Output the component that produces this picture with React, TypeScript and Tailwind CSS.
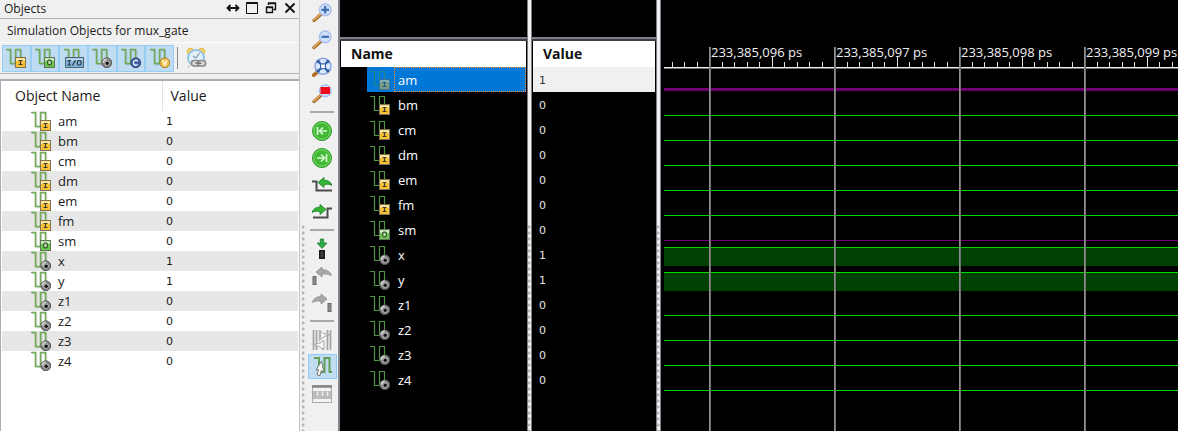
import React from "react";

type Kind = "in" | "out" | "inout" | "internal" | "constant" | "variable";

type Signal = { name: string; value: string; kind: Kind };

const signals: Signal[] = [
  { name: "am", value: "1", kind: "in" },
  { name: "bm", value: "0", kind: "in" },
  { name: "cm", value: "0", kind: "in" },
  { name: "dm", value: "0", kind: "in" },
  { name: "em", value: "0", kind: "in" },
  { name: "fm", value: "0", kind: "in" },
  { name: "sm", value: "0", kind: "out" },
  { name: "x", value: "1", kind: "internal" },
  { name: "y", value: "1", kind: "internal" },
  { name: "z1", value: "0", kind: "internal" },
  { name: "z2", value: "0", kind: "internal" },
  { name: "z3", value: "0", kind: "internal" },
  { name: "z4", value: "0", kind: "internal" },
];

const times = ["233,385,096 ps", "233,385,097 ps", "233,385,098 ps", "233,385,099 ps"];

function Badge({ kind }: { kind: Kind }) {
  switch (kind) {
    case "in":
      return (
        <>
          <rect x="9.5" y="9.5" width="10" height="10" fill="#f8c234" stroke="#7d7258" />
          <path d="M10 11.5H19" stroke="#ffe9a6" strokeWidth="2.5" />
          <path d="M12.500 12.500H16.500M14.500 12.500V16.500M12.500 16.500H16.500" stroke="#3f3a2c" strokeWidth="1.2" />
        </>
      );
    case "out":
      return (
        <>
          <rect x="9.5" y="9.5" width="10" height="10" fill="#6cc94f" stroke="#62705c" />
          <path d="M10 11.5H19" stroke="#d5f2cb" strokeWidth="2.5" />
          <rect x="12.7" y="12.2" width="3.6" height="4.6" rx="1.2" fill="#bce8ae" stroke="#2f4a28" strokeWidth="1.2" />
        </>
      );
    case "inout":
      return (
        <>
          <rect x="1.5" y="9.5" width="18" height="10" fill="#7fb2d8" stroke="#4d6577" />
          <path d="M2.5 11.5H18.5" stroke="#c6e0f2" strokeWidth="2" />
          <path d="M3.5 12.5H7M5.2 12.5V17M3.5 17H7M8.5 17.5L11.5 12" stroke="#26333d" strokeWidth="1.1" />
          <rect x="13.4" y="12.5" width="3.6" height="4.5" rx="1.2" fill="none" stroke="#26333d" strokeWidth="1.1" />
        </>
      );
    case "internal":
      return (
        <>
          <circle cx="14.8" cy="14.8" r="4.9" fill="#858585" stroke="#555" />
          <path d="M11.2 14.8A3.8 3.8 0 0 1 14.8 11.2" stroke="#d6d6d6" strokeWidth="1.6" fill="none" />
          <circle cx="15" cy="15" r="2.8" fill="#b0b0b0" />
          <circle cx="15.2" cy="15.2" r="1.7" fill="#151515" />
        </>
      );
    case "constant":
      return (
        <>
          <circle cx="14.8" cy="14.8" r="4.9" fill="#3f5f9f" stroke="#2c4272" />
          <path d="M16.8 13.2A2.5 2.5 0 1 0 16.8 16.4" stroke="#e8eefb" strokeWidth="1.4" fill="none" />
        </>
      );
    case "variable":
      return (
        <>
          <circle cx="14.8" cy="14.8" r="4.9" fill="#f3c04a" stroke="#a07c2c" />
          <path d="M12.8 12.4L14.8 17L16.8 12.4" stroke="#fff8e0" strokeWidth="1.5" fill="none" />
        </>
      );
  }
}

function SignalIcon({ kind, dark = false, dim = false }: { kind: Kind; dark?: boolean; dim?: boolean }) {
  return (
    <svg width="20" height="20" viewBox="0 0 20 20" fill="none" aria-hidden="true" className={dim ? "block shrink-0 opacity-50" : "block shrink-0"}>
      {!dark && <path d="M1 2.5H5.5V16.5H10.5V2.5H15.5V10" stroke="#00000022" strokeWidth="1.5" />}
      <path d="M0 1.5H4.5V15.5H9.5V1.5H14.5V10" stroke={dark ? "#4d9440" : "#70ab55"} strokeWidth={dark ? 1.2 : 1.6} />
      <Badge kind={kind} />
    </svg>
  );
}

function AlarmIcon() {
  return (
    <svg width="22" height="22" viewBox="0 0 22 22" fill="none" aria-hidden="true">
      <circle cx="4.5" cy="4.5" r="3.2" fill="#f5cf62" stroke="#dcb14a" />
      <circle cx="15.5" cy="4.5" r="3.2" fill="#f5cf62" stroke="#dcb14a" />
      <circle cx="10" cy="11" r="8" fill="#e2f0f9" stroke="#93c3e2" strokeWidth="1.8" />
      <path d="M10 11L13.5 6M10 11L7 9" stroke="#7d97ad" strokeWidth="1.2" />
      <path d="M3.5 18.5L2 20.5" stroke="#9ab3c6" />
      <rect x="5.5" y="13.5" width="7.5" height="5.500" rx="2.5" fill="#ddd" stroke="#8a8a8a" strokeWidth="1.700" />
      <rect x="12" y="13.5" width="7.5" height="5.500" rx="2.5" fill="#ddd" stroke="#8a8a8a" strokeWidth="1.700" />
      <path d="M9.5 16.200H15.5" stroke="#777" strokeWidth="1.6" />
    </svg>
  );
}

function Lens({ children }: { children: React.ReactNode }) {
  return (
    <svg width="20" height="20" viewBox="0 0 20 20" fill="none" aria-hidden="true">
      <path d="M2 17.500L8.500 11.800" stroke="#9b6524" strokeWidth="3.2" strokeLinecap="round" />
      <path d="M2 17L8 11.500" stroke="#e0a654" strokeWidth="1.7" strokeLinecap="round" />
      <circle cx="13.2" cy="6.8" r="5.8" fill="#cfe1fb" stroke="#a9bcf0" strokeWidth="1.4" />
      {children}
    </svg>
  );
}

const tools: Record<string, React.ReactNode> = {
  "Zoom in": (
    <Lens>
      <path d="M13.2 3V10.6M9.4 6.8H17" stroke="#3f6cae" strokeWidth="2.2" />
    </Lens>
  ),
  "Zoom out": (
    <Lens>
      <path d="M9.4 6.8H17" stroke="#3f6cae" strokeWidth="2.2" />
    </Lens>
  ),
  "Zoom to full view": (
    <svg width="20" height="20" viewBox="0 0 20 20" fill="none" aria-hidden="true">
      <path d="M1.8 18.2L5 15.4" stroke="#b46d20" strokeWidth="3.6" strokeLinecap="round" />
      <circle cx="11" cy="9.3" r="8" fill="#d9e8fc" stroke="#8ea6e0" strokeWidth="1.5" />
      <path d="M6 4.300L9 7.3M16 4.300L13 7.3M6 14.300L9 11.3M16 14.300L13 11.3" stroke="#2f5ba5" strokeWidth="2" />
      <path d="M4.8 6.800V3.300H8.3ZM17.2 6.800V3.300H13.7ZM4.8 11.8V15.3H8.3ZM17.2 11.8V15.3H13.7Z" fill="#2f5ba5" />
      <rect x="8.6" y="6.9" width="4.8" height="4.8" fill="#f2f8ff" stroke="#2f5ba5" />
    </svg>
  ),
  "Zoom to selection": (
    <Lens>
      <rect x="8.5" y="3" width="9.5" height="7" fill="#ee0a1c" />
    </Lens>
  ),
  "Go to start": (
    <svg width="22" height="22" viewBox="0 0 22 22" fill="none" aria-hidden="true">
      <circle cx="11" cy="11" r="9.5" fill="#41b935" stroke="#2a9a27" />
      <circle cx="11" cy="11" r="8.2" stroke="#7edb6e" />
      <path d="M6.5 7V15M16 11H8.5M12 7.500L8.5 11L12 14.500" stroke="#d8f7d0" strokeWidth="1.7" />
    </svg>
  ),
  "Go to end": (
    <svg width="22" height="22" viewBox="0 0 22 22" fill="none" aria-hidden="true">
      <circle cx="11" cy="11" r="9.5" fill="#41b935" stroke="#2a9a27" />
      <circle cx="11" cy="11" r="8.2" stroke="#7edb6e" />
      <path d="M15.5 7V15M6 11H13.5M10 7.500L13.5 11L10 14.500" stroke="#d8f7d0" strokeWidth="1.7" />
    </svg>
  ),
  "Previous transition": (
    <svg width="20" height="16" viewBox="0 0 20 16" fill="none" aria-hidden="true">
      <path d="M0 4.5H4.5V13.5H20" stroke="#4c4c4c" strokeWidth="2" />
      <path d="M6 5.5L12 .5V3.2C16 3 19 5 20 8.5C17.5 7 15 7 12 7.6V10.5Z" fill="#35b535" stroke="#167f1e" strokeWidth=".8" />
    </svg>
  ),
  "Next transition": (
    <svg width="20" height="16" viewBox="0 0 20 16" fill="none" aria-hidden="true">
      <path d="M1 13.5H15.5V4.5H20" stroke="#4c4c4c" strokeWidth="2" />
      <path d="M14 5.5L8 .5V3.2C4 3 1 5 0 8.5C2.500 7 5 7 8 7.600V10.5Z" fill="#35b535" stroke="#167f1e" strokeWidth=".8" />
    </svg>
  ),
  "Add marker": (
    <svg width="12" height="22" viewBox="0 0 12 22" fill="none" aria-hidden="true">
      <path d="M4.300 1H7.700V5H11L6 10.500L1 5H4.300Z" fill="#2fa846" stroke="#23813a" strokeWidth=".8" />
      <rect x="3.700" y="12.700" width="4.600" height="7.600" fill="#3d3d3d" stroke="#111" strokeWidth="1.300" />
    </svg>
  ),
  "Previous marker": (
    <svg width="20" height="20" viewBox="0 0 20 20" fill="none" aria-hidden="true">
      <path d="M4 6L10 1V3.700C14.500 3.500 18 5.500 19.500 9.500C16 7.800 13 7.800 10 8.200V11Z" fill="#a8a8a8" stroke="#8a8a8a" strokeWidth=".8" />
      <rect x="1" y="10.500" width="3" height="8" fill="#8c8c8c" stroke="#6b6b6b" />
    </svg>
  ),
  "Next marker": (
    <svg width="20" height="20" viewBox="0 0 20 20" fill="none" aria-hidden="true">
      <path d="M15 6L9 1V3.700C4.500 3.500 1.500 5.500 .5 9.500C3.500 7.800 6 7.800 9 8.200V11Z" fill="#a8a8a8" stroke="#8a8a8a" strokeWidth=".8" />
      <rect x="16" y="10.500" width="3" height="8" fill="#8c8c8c" stroke="#6b6b6b" />
    </svg>
  ),
  "Swap cursors": (
    <svg width="20" height="22" viewBox="0 0 20 22" fill="none" aria-hidden="true">
      <path d="M1.500 1V21M4.500 1V21M15.500 1V21M18.500 1V21" stroke="#a3a3a3" strokeWidth="1.700" />
      <path d="M7.500 1V12M10.500 13V21" stroke="#b5b5b5" strokeWidth="1.500" />
      <path d="M8 1.500L11 4.500L18 5.500L12 7.500L9 10.500Z" fill="#fafafa" stroke="#a5a5a5" />
      <path d="M12 11.500L8 14L1.500 15.500L7 17.500L12 20.500Z" fill="#fafafa" stroke="#a5a5a5" />
    </svg>
  ),
  "Snap to transition": (
    <svg width="20" height="21" viewBox="0 0 20 21" fill="none" aria-hidden="true">
      <path d="M1 2H6V16H11.500V2H16.500V16H19" stroke="#5f9f50" strokeWidth="2" />
      <path d="M8.500 5L3 14L5.500 13.500L4 19L7 19.500L8.300 14.500L11 16.500Z" fill="#fafafa" stroke="#777" />
    </svg>
  ),
  "Floating ruler": (
    <svg width="22" height="20" viewBox="0 0 22 20" fill="none" aria-hidden="true">
      <rect x="1.500" y="1.500" width="19" height="17" fill="#f2f2f2" stroke="#ababab" />
      <path d="M1 2.500H21" stroke="#858585" strokeWidth="2.500" />
      <rect x="2" y="7" width="18" height="8" fill="#bcbcbc" />
      <path d="M6.500 7.500V12M11.500 7.500V12M16.500 7.500V12" stroke="#f0f0f0" strokeWidth="1.400" />
    </svg>
  ),
};

const toolGroups = [
  ["Zoom in", "Zoom out", "Zoom to full view", "Zoom to selection"],
  ["Go to start", "Go to end", "Previous transition", "Next transition"],
  ["Add marker", "Previous marker", "Next marker"],
  ["Swap cursors", "Snap to transition", "Floating ruler"],
];

const filters: { kind: Kind; label: string }[] = [
  { kind: "in", label: "Inputs" },
  { kind: "out", label: "Outputs" },
  { kind: "inout", label: "Bidirectional" },
  { kind: "internal", label: "Internal" },
  { kind: "constant", label: "Constants" },
  { kind: "variable", label: "Variables" },
];

function Grip() {
  return (
    <div className="mt-[225px] w-[4px] grow bg-[radial-gradient(circle_at_1px_2px,#b4b4b4_1px,transparent_2px)] bg-[length:4px_6px]" />
  );
}

function PaneSplitter() {
  return (
    <div className="flex w-[5px] shrink-0 flex-col items-center border-x border-[#7d7f88] bg-[#f0f0f0]">
      <Grip />
    </div>
  );
}

function ObjectsPanel() {
  return (
    <section className="flex w-[300px] shrink-0 flex-col border-r border-[#c3c3c3]">
      <header className="flex h-[19px] items-center justify-between border-b border-[#b4b4b4] pr-[3px] pl-[4px]">
        <h2 className="text-[12px] leading-[18px]">Objects</h2>
        <div className="flex items-center gap-[6px] pb-[2px]">
          <button aria-label="Move">
            <svg width="14" height="12" viewBox="0 0 14 12" fill="none" className="block" aria-hidden="true">
              <path d="M2 6H12M4.500 3L1.500 6L4.500 9M9.500 3L12.500 6L9.500 9" stroke="#111" strokeWidth="1.800" />
            </svg>
          </button>
          <button aria-label="Maximize">
            <svg width="12" height="12" viewBox="0 0 12 12" fill="none" className="block" aria-hidden="true">
              <path d="M.5 .5H11.500V11.500H.5ZM0 1.500H12" stroke="#111" />
            </svg>
          </button>
          <button aria-label="Restore" className="px-[1px]">
            <svg width="12" height="12" viewBox="0 0 12 12" fill="none" className="block" aria-hidden="true">
              <path d="M3.500 3V1.500H10.500V7.500H8.500M3 1H11" stroke="#111" strokeWidth="1.400" />
              <path d="M1.500 5.500H7.500V10.500H1.500ZM1 5H8" stroke="#111" strokeWidth="1.400" />
            </svg>
          </button>
          <button aria-label="Close">
            <svg width="12" height="12" viewBox="0 0 12 12" fill="none" className="block" aria-hidden="true">
              <path d="M1.500 1.500L10.500 10.500M10.500 1.500L1.500 10.500" stroke="#111" strokeWidth="1.800" />
            </svg>
          </button>
        </div>
      </header>
      <p className="h-[23px] pl-[7px] text-[12px] leading-[23px]">Simulation Objects for mux_gate</p>
      <div className="mb-[5px] flex h-[32px] items-center border-y border-t-white border-b-[#b4b4b4] pl-[2px]">
        <div className="flex w-[172px]">
          {filters.map((f) => (
            <button
              key={f.kind}
              aria-label={f.label}
              aria-pressed="true"
              className="flex h-[27px] flex-1 items-center justify-center border border-[#98cdf4] bg-[#c0dcf3]"
            >
              <SignalIcon kind={f.kind} />
            </button>
          ))}
        </div>
        <div className="ml-[3px] h-[22px] w-px bg-[#8a8a8a]" />
        <button aria-label="Relaunch" className="ml-[8px]">
          <AlarmIcon />
        </button>
      </div>
      <div className="grow border-t-2 border-l border-[#a8adb5] bg-white px-[1px]">
        <table className="w-full table-fixed border-collapse text-left">
          <thead>
            <tr className="h-[30px] text-[14px] leading-[20px]">
              <th className="w-[160px] border-r border-[#e2e2e2] pl-[13px] font-normal">Object Name</th>
              <th className="pl-[8px] font-normal">Value</th>
            </tr>
          </thead>
          <tbody>
            {signals.map((s) => (
              <tr key={s.name} className="h-[20px] even:bg-[#e7e7e7]">
                <td className="p-0">
                  <div className="flex h-[20px] items-center gap-[7px] pl-[29px] text-[13px] leading-[20px]">
                    <SignalIcon kind={s.kind} />
                    {s.name}
                  </div>
                </td>
                <td className="p-0 pt-[2px] pl-[4px] font-['DejaVu_Sans',sans-serif] text-[11px] leading-[18px]">{s.value}</td>
              </tr>
            ))}
          </tbody>
        </table>
      </div>
    </section>
  );
}

function WaveToolbar() {
  return (
    <nav aria-label="Waveform tools" className="flex w-[31px] shrink-0 flex-col gap-[2px] pl-[1px]">
      {toolGroups.map((group, g) => (
        <React.Fragment key={group[0]}>
          {g > 0 && <div className="my-[3px] mr-[4px] ml-[2px] h-[2px] shrink-0 bg-[#a9a9a9]" />}
          {group.map((name) => (
            <button
              key={name}
              aria-label={name}
              className={
                name === "Snap to transition"
                  ? "mr-[1px] flex h-[25px] shrink-0 items-center justify-center border border-[#90c8f6] bg-[#c0dcf3]"
                  : "mr-[3px] flex h-[25px] shrink-0 items-center justify-center"
              }
            >
              {tools[name]}
            </button>
          ))}
        </React.Fragment>
      ))}
    </nav>
  );
}

const headCell = "h-[26px] bg-white p-0 text-left text-[14px] leading-[26px] font-bold text-[#111]";

function PaneTop() {
  return (
    <div className="-mx-[1px] h-[41px] border-b-2 border-[#3c3c42]">
      <div className="h-full border-b-2 border-[#7d7f88]" />
    </div>
  );
}

function NamePane() {
  return (
    <div className="w-[187px] shrink-0 px-[1px]">
      <PaneTop />
      <table className="w-full border-collapse">
        <thead>
          <tr>
            <th className={headCell}>
              <span className="pl-[10px]">Name</span>
            </th>
          </tr>
        </thead>
        <tbody>
          {signals.map((s, i) => (
            <tr key={s.name}>
              <td className="p-0 pl-[26px]">
                <div className={i === 0 ? "flex h-[25px] items-center gap-[4px] bg-[#0078d7] pl-[3px]" : "flex h-[25px] items-center gap-[4px] pl-[3px]"}>
                  <SignalIcon kind={s.kind} dark dim={i === 0} />
                  <span
                    className={
                      i === 0
                        ? "h-[25px] grow border border-dotted border-[#ff9030] pt-[1px] pl-[3px] text-[13px] leading-[23px] text-white"
                        : "grow pt-[1px] pl-[4px] text-[13px] leading-[24px] text-white"
                    }
                  >
                    {s.name}
                  </span>
                </div>
              </td>
            </tr>
          ))}
        </tbody>
      </table>
    </div>
  );
}

function ValuePane() {
  return (
    <div className="w-[124px] shrink-0 px-[1px]">
      <PaneTop />
      <table className="w-full border-collapse">
        <thead>
          <tr>
            <th className={headCell}>
              <span className="pl-[10px]">Value</span>
            </th>
          </tr>
        </thead>
        <tbody>
          {signals.map((s, i) => (
            <tr key={s.name} className={i === 0 ? "bg-[#f0f0f0] text-[#333]" : "text-[#e4e4e4]"}>
              <td className="h-[25px] p-0 pt-[2px] pl-[6px] font-['DejaVu_Sans',sans-serif] text-[11px] leading-[23px]">{s.value}</td>
            </tr>
          ))}
        </tbody>
      </table>
    </div>
  );
}

const STEP = 125;
const FIRST = 48;

function Waveform() {
  const majors = Array.from({ length: 16 }, (_, i) => FIRST + i * STEP);
  const ticks = Array.from({ length: 160 }, (_, i) => ({
    x: Math.round(FIRST + (i - 3) * 12.5),
    tall: i >= 3 && (i - 3) % 10 === 5,
  }));
  return (
    <div className="grid min-w-0 grow overflow-hidden">
      <svg width="100%" height="100%" className="col-start-1 row-start-1 block" shapeRendering="crispEdges" aria-hidden="true">
        {signals.map((s, i) => {
          const base = 67 + i * 25;
          if (s.value === "1" && s.kind === "internal") {
            return (
              <g key={s.name}>
                <rect x="3" y={base + 5} width="100%" height="19" fill="#004000" />
                <rect x="3" y={base + 5} width="100%" height="1" fill="#00d800" />
              </g>
            );
          }
          if (s.name === "am") return <rect key={s.name} x="3" y="88" width="100%" height="3" fill="#700070" />;
          if (s.name === "sm") return <rect key={s.name} x="3" y="240" width="100%" height="1" fill="#700070" />;
          return <rect key={s.name} x="3" y={base + 23} width="100%" height="1" fill="#00d800" />;
        })}
        <rect x="3" y="67" width="100%" height="1" fill="#f0f0f0" />
        <rect x="3" y="68" width="100%" height="1" fill="#707070" />
        {ticks.map((t) => (
          <rect key={t.x} x={t.x} y={t.tall ? 57 : 62} width="1" height={t.tall ? 10 : 5} fill="#e0e0e0" />
        ))}
        {majors.map((x) => (
          <g key={x}>
            <rect x={x} y="47" width="1" height="100%" fill="#909090" />
            <rect x={x + 1} y="47" width="1" height="100%" fill="#707070" />
          </g>
        ))}
      </svg>
      <div className="col-start-1 row-start-1 flex w-0 pt-[44px] pl-[50px]">
        {times.map((t) => (
          <span key={t} className="w-[125px] shrink-0 text-[13px] leading-[16px] whitespace-nowrap text-[#f0f0f0]">
            {t}
          </span>
        ))}
      </div>
    </div>
  );
}

export default function App() {
  return (
    <main className="flex min-h-screen bg-[#f0f0f0] font-['Open_Sans','Noto_Sans',sans-serif] text-[#1a1a1a]">
      <ObjectsPanel />
      <div className="flex w-[7px] shrink-0 flex-col items-center">
        <Grip />
      </div>
      <WaveToolbar />
      <div className="flex min-w-0 grow border-l-2 border-[#83868e] bg-black">
        <NamePane />
        <PaneSplitter />
        <ValuePane />
        <PaneSplitter />
        <Waveform />
      </div>
    </main>
  );
}
